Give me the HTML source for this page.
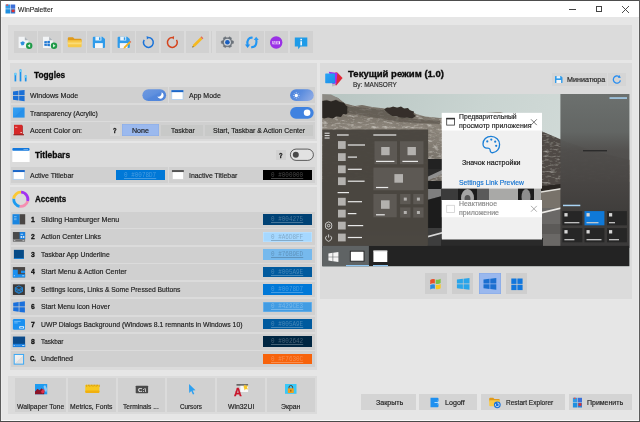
<!DOCTYPE html>
<html lang="en"><head><meta charset="utf-8"><title>WinPaletter</title>
<style>
html,body{margin:0;padding:0;}
body{width:640px;height:422px;overflow:hidden;background:#e6e6e6;font-family:"Liberation Sans", sans-serif;}
#w{position:relative;width:640px;height:422px;overflow:hidden;background:#e6e6e6;}
#w div,#w svg{position:absolute;}
#w span{position:absolute;white-space:nowrap;line-height:10px;height:10px;transform-origin:0 50%;}
</style></head><body><div id="w">
<div style="left:0px;top:0px;width:640px;height:422px;background:#e6e6e6;"></div>
<div style="left:0px;top:1px;width:640px;height:16.4px;background:#ffffff;"></div>
<div style="left:0px;top:0px;width:640px;height:1px;background:#4d4d4d;"></div>
<div style="left:0px;top:0px;width:1px;height:422px;background:#5c5c5c;"></div>
<div style="left:1px;top:18px;width:0.7px;height:402px;background:#ececec;"></div>
<div style="left:639px;top:0px;width:1px;height:422px;background:#5c5c5c;"></div>
<div style="left:638.3px;top:18px;width:0.7px;height:402px;background:#ececec;"></div>
<div style="left:1px;top:419.9px;width:638px;height:0.8px;background:#fafafa;"></div>
<div style="left:0px;top:420.7px;width:640px;height:1.3px;background:#4a4a4a;"></div>
<svg style="left:5px;top:4px" width="11" height="10" viewBox="0 0 11 10"><rect x="0.5" y="0.5" width="4.6" height="4.2" fill="#2f9be8"/><rect x="5.6" y="0.5" width="4.6" height="4.2" fill="#3a6fd8"/><rect x="0.5" y="5.2" width="4.6" height="4.3" fill="#1f8fe0"/><rect x="5.6" y="5.2" width="4.6" height="4.3" fill="#2c7fd6"/><rect x="6.6" y="5.6" width="3" height="2.6" fill="#e03030"/><rect x="1.2" y="0.3" width="2" height="1.5" fill="#e05050"/></svg>
<div style="left:569.4px;top:8.6px;width:6.8px;height:0.9px;background:#444;"></div>
<div style="left:595.8px;top:6px;width:6.2px;height:6.2px;background:transparent;border:0.9px solid #444;box-sizing:border-box;"></div>
<svg style="left:621px;top:5px" width="9" height="9" viewBox="0 0 9 9"><path d="M1 1 L8 8 M8 1 L1 8" stroke="#3a3a3a" stroke-width="0.9" fill="none"/></svg>
<div style="left:8px;top:25px;width:624px;height:34.5px;background:#dbdbdb;"></div>
<div style="left:13.9px;top:31.3px;width:23.0px;height:21.5px;background:#d1d1d1;"></div>
<div style="left:38.2px;top:31.3px;width:23.0px;height:21.5px;background:#d1d1d1;"></div>
<div style="left:63.0px;top:31.3px;width:23.0px;height:21.5px;background:#d1d1d1;"></div>
<div style="left:87.4px;top:31.3px;width:23.0px;height:21.5px;background:#d1d1d1;"></div>
<div style="left:111.9px;top:31.3px;width:23.0px;height:21.5px;background:#d1d1d1;"></div>
<div style="left:136.4px;top:31.3px;width:23.0px;height:21.5px;background:#d1d1d1;"></div>
<div style="left:161.1px;top:31.3px;width:23.0px;height:21.5px;background:#d1d1d1;"></div>
<div style="left:185.7px;top:31.3px;width:23.0px;height:21.5px;background:#d1d1d1;"></div>
<div style="left:216.2px;top:31.3px;width:23.0px;height:21.5px;background:#d1d1d1;"></div>
<div style="left:240.6px;top:31.3px;width:23.0px;height:21.5px;background:#d1d1d1;"></div>
<div style="left:265px;top:31.3px;width:23.0px;height:21.5px;background:#d1d1d1;"></div>
<div style="left:289.5px;top:31.3px;width:23.0px;height:21.5px;background:#d1d1d1;"></div>
<div style="left:211.4px;top:31.3px;width:0.9px;height:21.5px;background:#d0d0d0;"></div>
<div style="left:9.5px;top:62.6px;width:307.3px;height:78.1px;background:#dbdbdb;"></div>
<div style="left:10.8px;top:87.3px;width:157.2px;height:16.1px;background:#d0d0d0;"></div>
<div style="left:168.9px;top:87.3px;width:146.5px;height:16.1px;background:#d0d0d0;"></div>
<div style="left:10.8px;top:104.8px;width:304.6px;height:16.1px;background:#d0d0d0;"></div>
<div style="left:10.8px;top:122.3px;width:304.6px;height:16.4px;background:#d0d0d0;"></div>
<div style="left:9.5px;top:143.1px;width:307.3px;height:41.6px;background:#dbdbdb;"></div>
<div style="left:10.8px;top:167.3px;width:157.2px;height:15.6px;background:#d0d0d0;"></div>
<div style="left:168.9px;top:167.3px;width:146.5px;height:15.6px;background:#d0d0d0;"></div>
<div style="left:9.5px;top:186.6px;width:307.3px;height:183px;background:#dbdbdb;"></div>
<div style="left:115.7px;top:169.9px;width:49.5px;height:10.4px;background:#0078d7;"></div>
<div style="left:262.7px;top:169.9px;width:49.5px;height:10.4px;background:#000000;"></div>
<div style="left:10.8px;top:212.0px;width:304.6px;height:15.7px;background:#d0d0d0;"></div>
<div style="left:262.7px;top:214.4px;width:49.5px;height:10.5px;background:#004275;"></div>
<div style="left:10.8px;top:229.42000000000002px;width:304.6px;height:15.7px;background:#d0d0d0;"></div>
<div style="left:262.7px;top:231.82000000000002px;width:49.5px;height:10.5px;background:#a6d8ff;box-shadow:inset 0 0 0 0.6px #c1e4ff;"></div>
<div style="left:10.8px;top:246.84px;width:304.6px;height:15.7px;background:#d0d0d0;"></div>
<div style="left:262.7px;top:249.24px;width:49.5px;height:10.5px;background:#76b9ed;"></div>
<div style="left:10.8px;top:264.26px;width:304.6px;height:15.7px;background:#d0d0d0;"></div>
<div style="left:262.7px;top:266.65999999999997px;width:49.5px;height:10.5px;background:#005a9e;"></div>
<div style="left:10.8px;top:281.68px;width:304.6px;height:15.7px;background:#d0d0d0;"></div>
<div style="left:262.7px;top:284.08px;width:49.5px;height:10.5px;background:#0078d7;"></div>
<div style="left:10.8px;top:299.1px;width:304.6px;height:15.7px;background:#d0d0d0;"></div>
<div style="left:262.7px;top:301.5px;width:49.5px;height:10.5px;background:#429ce3;box-shadow:inset 0 0 0 0.6px #7bbaeb;"></div>
<div style="left:10.8px;top:316.52px;width:304.6px;height:15.7px;background:#d0d0d0;"></div>
<div style="left:262.7px;top:318.91999999999996px;width:49.5px;height:10.5px;background:#005a9e;"></div>
<div style="left:10.8px;top:333.94px;width:304.6px;height:15.7px;background:#d0d0d0;"></div>
<div style="left:262.7px;top:336.34px;width:49.5px;height:10.5px;background:#002642;"></div>
<div style="left:10.8px;top:351.36px;width:304.6px;height:15.7px;background:#d0d0d0;"></div>
<div style="left:262.7px;top:353.76px;width:49.5px;height:10.5px;background:#f7630c;"></div>
<div style="left:8.4px;top:376px;width:308.8px;height:37.6px;background:#dbdbdb;"></div>
<div style="left:14.5px;top:378.3px;width:51.9px;height:33.4px;background:#d1d1d1;"></div>
<div style="left:68.1px;top:378.3px;width:48.2px;height:33.4px;background:#d1d1d1;"></div>
<div style="left:118px;top:378.3px;width:47.3px;height:33.4px;background:#d1d1d1;"></div>
<div style="left:167.3px;top:378.3px;width:47.8px;height:33.4px;background:#d1d1d1;"></div>
<div style="left:217.2px;top:378.3px;width:47.7px;height:33.4px;background:#d1d1d1;"></div>
<div style="left:267px;top:378.3px;width:47.6px;height:33.4px;background:#d1d1d1;"></div>
<div style="left:361.1px;top:394.2px;width:54.7px;height:16.3px;background:#d4d4d4;"></div>
<div style="left:418.9px;top:394.2px;width:58.6px;height:16.3px;background:#d4d4d4;"></div>
<div style="left:481.4px;top:394.2px;width:83.8px;height:16.3px;background:#d4d4d4;"></div>
<div style="left:569.1px;top:394.2px;width:62.6px;height:16.3px;background:#d4d4d4;"></div>
<div style="left:320.3px;top:63.3px;width:312.2px;height:236.1px;background:#dbdbdb;"></div>
<div style="left:551.9px;top:73px;width:54.9px;height:12.7px;background:#d5d5d5;"></div>
<div style="left:608.1px;top:73px;width:17.6px;height:12.7px;background:#d5d5d5;"></div>
<div style="left:425.4px;top:273.3px;width:21.2px;height:21px;background:#cecece;"></div>
<div style="left:452.2px;top:273.3px;width:21px;height:21px;background:#cecece;"></div>
<div style="left:506px;top:273.3px;width:21px;height:21px;background:#cecece;"></div>
<div style="left:478.9px;top:273.3px;width:21.9px;height:21px;background:#9ab8ee;box-shadow:inset 0 0 0 0.6px #86a8e6;"></div>
<svg style="left:0;top:0" width="640" height="422" viewBox="0 0 640 422"><defs>
<clipPath id="pc"><rect x="322.2" y="94" width="307.4" height="172.4"/></clipPath>
<linearGradient id="sky" x1="0" y1="0" x2="1" y2="0.3"><stop offset="0" stop-color="#b5c3c0"/><stop offset="0.5" stop-color="#c9d4d1"/><stop offset="1" stop-color="#d6dedb"/></linearGradient>
<linearGradient id="hill" x1="0" y1="0" x2="0" y2="1"><stop offset="0" stop-color="#6e675e"/><stop offset="0.2" stop-color="#7b746a"/><stop offset="0.32" stop-color="#8f887e"/><stop offset="0.6" stop-color="#7a746c"/><stop offset="1" stop-color="#5f5a54"/></linearGradient>
<linearGradient id="road" x1="0" y1="0" x2="0" y2="1"><stop offset="0" stop-color="#5a5a58"/><stop offset="1" stop-color="#77777a"/></linearGradient>
<linearGradient id="ac" x1="0" y1="0" x2="0" y2="1"><stop offset="0" stop-color="#696d6b"/><stop offset="0.25" stop-color="#5f6260"/><stop offset="0.37" stop-color="#4f4d4b"/><stop offset="0.62" stop-color="#464341"/><stop offset="0.8" stop-color="#3d3b39"/><stop offset="1" stop-color="#393838"/></linearGradient>
<filter id="bl" x="-5%" y="-5%" width="110%" height="110%"><feGaussianBlur stdDeviation="0.55"/></filter>
<filter id="nz" x="0" y="0" width="100%" height="100%"><feTurbulence type="fractalNoise" baseFrequency="0.16 0.4" numOctaves="3" seed="11"/><feColorMatrix type="matrix" values="0 0 0 0 0.2  0 0 0 0 0.18  0 0 0 0 0.15  2.2 0 0 0 -1.0"/><feComposite in2="SourceGraphic" operator="in"/></filter>
<filter id="nl" x="0" y="0" width="100%" height="100%"><feTurbulence type="fractalNoise" baseFrequency="0.18 0.45" numOctaves="3" seed="3"/><feColorMatrix type="matrix" values="0 0 0 0 0.78  0 0 0 0 0.76  0 0 0 0 0.72  0 2.2 0 0 -1.1"/><feComposite in2="SourceGraphic" operator="in"/></filter>
</defs><g clip-path="url(#pc)"><g filter="url(#bl)"><rect x="312" y="84" width="328" height="193" fill="url(#sky)"/><path d="M322 95 L330 95.5 L338 98 L345 103.5 L355 106 L362 105 L372 107 L385 108.5 L392 107 L400 108 L410 110 L416 114 L425 116.5 L440 118 L470 114 L500 112 L520 118 L542 131.8 L560 139.4 L590 150 L630 160 L630 200 L322 200 Z" fill="url(#hill)"/><path d="M322 95 L330 95.5 L338 98 L345 103.5 L355 106 L362 105 L372 107 L385 108.5 L392 107 L400 108 L410 110 L416 114 L425 116.5 L440 118 L470 114 L500 112 L520 118 L542 131.8 L560 139.4 L590 150 L630 160 L630 200 L322 200 Z" fill="#000" filter="url(#nz)" opacity="0.8"/><path d="M322 95 L330 95.5 L338 98 L345 103.5 L355 106 L362 105 L372 107 L385 108.5 L392 107 L400 108 L410 110 L416 114 L425 116.5 L440 118 L470 114 L500 112 L520 118 L542 131.8 L560 139.4 L590 150 L630 160 L630 200 L322 200 Z" fill="#000" filter="url(#nl)" opacity="0.7"/><path d="M320 101 L327 100.2 L331 101.5 L336 100 L340 102 L344 102.8 L346 105.5 L348.5 107 L347.5 110 L349 112 L346 114.5 L343 114 L341 117 L336 116.5 L333 118.5 L328 117.5 L324 118.5 L320 117 Z" fill="#2a2622"/><path d="M320 94 L331 94.5 L338 98 L341 101 L336 99.5 L331 101 L327 99.8 L320 100.5 Z" fill="#8d8a84"/><path d="M384 109.5 L387 107.5 L390 108 L393 106.5 L397 107.800 L401 106.500 L404 108.500 L408 108 L410 110.500 L414 111.500 L413.500 114 L416 116 L412 118.500 L407 117.500 L402 118.500 L397 116.500 L392 116 L388 113.500 Z" fill="#342f2a"/><path d="M347 106 L384 110 L392 116 L416 119 L440 121 L440 124 L400 122 L347 113 Z" fill="#5d574f" opacity="0.7"/><rect x="322" y="182" width="308" height="66" fill="url(#road)"/><rect x="427" y="159" width="15" height="10" fill="#242424"/><path d="M427 176 L442 169 L442 174 L427 181 Z" fill="#8f8f8f"/><rect x="427" y="181" width="15" height="8" fill="#1f1f1f"/><path d="M427 169 L442 169 L442 170 L427 177 Z" fill="#2a2a2a"/><path d="M427 189 L442 189 L442 196 L427 200 Z" fill="#7e7e7e"/><path d="M427 200 L442 196 L442 228 L427 228 Z" fill="#1e1e1f"/><rect x="427" y="228" width="15" height="18" fill="#3c3c3c"/><path d="M427 236 L442 232 L442 233.800 L427 237.800 Z" fill="#d8d8d8"/><rect x="441" y="188" width="102" height="13" fill="#a9a9a7"/><rect x="441" y="188" width="17" height="13" fill="#3a3a3a"/><rect x="458" y="188" width="19" height="13" fill="#1c1c1c"/><ellipse cx="467.500" cy="198" rx="6.500" ry="9" fill="#a5a5a5"/><ellipse cx="467.500" cy="199" rx="3" ry="4" fill="#555"/><rect x="477" y="188" width="12" height="13" fill="#5a5a5a"/><rect x="518" y="188" width="16" height="13" fill="#1b1b1b"/><ellipse cx="526" cy="197" rx="4.500" ry="8" fill="#8d8d8d"/><path d="M541 131 L561 139.500 L561 191 L541 191 Z" fill="#4f4a45"/><path d="M541 131 L561 139.500 L561 191 L541 191 Z" fill="#000" filter="url(#nl)" opacity="0.55"/><rect x="541" y="188" width="20" height="24" fill="#78726a"/><path d="M541 186 L561 184 L561 188.500 L541 191.500 Z" fill="#2a2624"/><path d="M541 191.200 L561 188 L561 189.500 L541 192.700 Z" fill="#e4e2dc"/><rect x="541" y="208" width="20" height="38" fill="#6a6866"/><path d="M541 212 L561 207.200 L561 208.900 L541 213.700 Z" fill="#eceae6"/><rect x="541" y="224" width="20" height="10" fill="#5c5a58"/><rect x="441" y="238" width="102" height="9" fill="#2b2b2b"/></g><rect x="322.2" y="129.5" width="105.9" height="116.4" fill="#49453f" fill-opacity="0.97"/><rect x="324.6" y="132.7" width="5" height="1" fill="#e9e9e9"/><rect x="324.6" y="135.1" width="5" height="1" fill="#e9e9e9"/><rect x="324.6" y="137.5" width="5" height="1" fill="#e9e9e9"/><rect x="337" y="134.4" width="11.7" height="1.2" fill="#e9e9e9"/><rect x="373.3" y="134.4" width="23" height="1.2" fill="#e9e9e9"/><rect x="338" y="141.1" width="7.7" height="7.8" fill="#b3b1ae"/><rect x="347.8" y="144.4" width="17.2" height="1.2" fill="#e9e9e9"/><rect x="338" y="153.2" width="7.7" height="7.8" fill="#b3b1ae"/><rect x="347.8" y="156.5" width="9.2" height="1.2" fill="#e9e9e9"/><rect x="338" y="165.4" width="7.7" height="7.8" fill="#b3b1ae"/><rect x="347.8" y="168.70000000000002" width="14.0" height="1.2" fill="#e9e9e9"/><rect x="338" y="177.29999999999998" width="7.7" height="7.8" fill="#b3b1ae"/><rect x="347.8" y="180.6" width="16.8" height="1.2" fill="#e9e9e9"/><rect x="338" y="197.79999999999998" width="7.7" height="7.8" fill="#b3b1ae"/><rect x="347.8" y="201.1" width="14.2" height="1.2" fill="#e9e9e9"/><rect x="338" y="209.7" width="7.7" height="7.8" fill="#b3b1ae"/><rect x="347.8" y="213.0" width="8.6" height="1.2" fill="#e9e9e9"/><rect x="338" y="221.7" width="7.7" height="7.8" fill="#b3b1ae"/><rect x="347.8" y="225.0" width="15.4" height="1.2" fill="#e9e9e9"/><rect x="338" y="233.6" width="7.7" height="7.8" fill="#b3b1ae"/><rect x="347.8" y="236.9" width="14.2" height="1.2" fill="#e9e9e9"/><rect x="337.6" y="192" width="11.4" height="1.2" fill="#e9e9e9"/><g fill="none" stroke="#e9e9e9" stroke-width="0.8"><path d="M328.6 221.9 l2.7 1.2 l0.5 2.6 l-0.5 2.5 l-2.7 1.2 l-2.7 -1.2 l-0.5 -2.5 l0.5 -2.6 z"/><circle cx="328.6" cy="225.6" r="1.3"/><path d="M326.7 235.8 a3 3 0 1 0 3.8 0 M328.6 234.4 v3.2"/></g><rect x="374.5" y="141.2" width="22.5" height="23" fill="#5d5954"/><rect x="400" y="141.2" width="23.5" height="23" fill="#5d5954"/><rect x="381.2" y="147" width="8.4" height="8.2" fill="#b3b1ae"/><rect x="407.5" y="147" width="8.4" height="8.2" fill="#b3b1ae"/><rect x="376" y="160.8" width="18.4" height="1.2" fill="#e9e9e9"/><rect x="402.4" y="160.8" width="15.6" height="1.2" fill="#e9e9e9"/><rect x="373.4" y="167.6" width="50.3" height="22.7" fill="#5d5954"/><rect x="394.4" y="174.1" width="8.6" height="8.6" fill="#b3b1ae"/><rect x="376" y="186.9" width="12.2" height="1.2" fill="#e9e9e9"/><rect x="373.4" y="194" width="23.3" height="23.3" fill="#5d5954"/><rect x="381" y="200.3" width="8.6" height="8.5" fill="#b3b1ae"/><rect x="376" y="214.2" width="8.8" height="1.2" fill="#e9e9e9"/><rect x="400.1" y="194" width="10.4" height="10.2" fill="#5d5954"/><rect x="403.8" y="197.6" width="3" height="3" fill="#b3b1ae"/><rect x="400.1" y="207.4" width="10.4" height="10.2" fill="#5d5954"/><rect x="403.8" y="211.0" width="3" height="3" fill="#b3b1ae"/><rect x="413.2" y="194" width="10.4" height="10.2" fill="#5d5954"/><rect x="416.9" y="197.6" width="3" height="3" fill="#b3b1ae"/><rect x="413.2" y="207.4" width="10.4" height="10.2" fill="#5d5954"/><rect x="416.9" y="211.0" width="3" height="3" fill="#b3b1ae"/><rect x="560.4" y="94" width="69.3" height="152" fill="url(#ac)" fill-opacity="0.97"/><rect x="609.5" y="97.3" width="17.5" height="1.5" fill="#a9d4f5"/><rect x="583" y="150" width="24" height="1.4" fill="#2b2b2b"/><rect x="563" y="204.7" width="17.3" height="1.5" fill="#a9d4f5"/><rect x="562.4" y="211.1" width="19.9" height="14.2" fill="#262626"/><rect x="564.4" y="213.1" width="3.2" height="3.4" fill="#d6d6d6"/><rect x="564.4" y="222.1" width="15" height="1.2" fill="#d0d0d0"/><rect x="584.5" y="211.1" width="19.9" height="14.2" fill="#0f79d8"/><rect x="586.5" y="213.1" width="3.2" height="3.4" fill="#d6d6d6"/><rect x="586.5" y="222.1" width="12" height="1.2" fill="#d0d0d0"/><rect x="607" y="211.1" width="19.9" height="14.2" fill="#262626"/><rect x="609" y="213.1" width="3.2" height="3.4" fill="#d6d6d6"/><rect x="609" y="222.1" width="6" height="1.2" fill="#d0d0d0"/><rect x="562.4" y="228.1" width="19.9" height="14.2" fill="#262626"/><rect x="564.4" y="230.1" width="3.2" height="3.4" fill="#d6d6d6"/><rect x="564.4" y="239.1" width="10" height="1.2" fill="#d0d0d0"/><rect x="584.5" y="228.1" width="19.9" height="14.2" fill="#262626"/><rect x="586.5" y="230.1" width="3.2" height="3.4" fill="#d6d6d6"/><rect x="586.5" y="239.1" width="15" height="1.2" fill="#d0d0d0"/><rect x="607" y="228.1" width="19.9" height="14.2" fill="#262626"/><rect x="609" y="230.1" width="3.2" height="3.4" fill="#d6d6d6"/><rect x="609" y="239.1" width="10" height="1.2" fill="#d0d0d0"/><rect x="322.2" y="245.9" width="307.4" height="20.5" fill="#232323"/><rect x="322.2" y="245.9" width="46.7" height="20.5" fill="#5f6364"/><rect x="346" y="265" width="23" height="1.4" fill="#8fc6f2"/><rect x="373" y="265" width="15" height="1.4" fill="#8fc6f2"/><g fill="#f4f4f4"><path d="M328.4 253.4 L332.6 252.8 L332.6 256.7 L328.4 256.7 Z"/><path d="M333.2 252.7 L338.4 252 L338.4 256.7 L333.2 256.7 Z"/><path d="M328.4 257.3 L332.6 257.3 L332.6 261.2 L328.4 260.6 Z"/><path d="M333.2 257.3 L338.4 257.3 L338.4 262 L333.2 261.3 Z"/></g><rect x="350.3" y="251.2" width="13.7" height="10" fill="#ffffff" stroke="#222" stroke-width="0.9"/><rect x="373.4" y="250.6" width="13.9" height="11.4" fill="#ffffff"/><rect x="373.4" y="250.6" width="13.9" height="1" fill="#ddd"/><rect x="441.8" y="112.9" width="100.2" height="75.7" fill="#f0f0f0"/><rect x="441.8" y="112.9" width="100.2" height="17.6" fill="#ffffff"/><rect x="446.7" y="118.3" width="7.8" height="6.8" fill="#fff" stroke="#333" stroke-width="0.8"/><rect x="446.3" y="117.9" width="8.6" height="1.5" fill="#333"/><path d="M531 119.3 L536.8 125.1 M536.8 119.3 L531 125.1" stroke="#555" stroke-width="0.8" fill="none"/><rect x="441.8" y="200" width="100.2" height="39.5" fill="#f0f0f0"/><rect x="441.8" y="200" width="100.2" height="17.2" fill="#ffffff"/><rect x="446.7" y="205.3" width="7.8" height="7.2" fill="#fff" stroke="#d0d0d0" stroke-width="0.8"/><path d="M531 205.9 L536.8 211.7 M536.8 205.9 L531 211.7" stroke="#999" stroke-width="0.8" fill="none"/><g transform="translate(0 -0.9)"><g fill="none" stroke="#1b7fd6" stroke-width="1.3"><path d="M491 137.2 c-4.6 0 -8 3.4 -8 7.6 c0 3.2 2.2 4.4 4.2 4.2 c2 -0.2 3 0.8 3 2.4 c0 1.6 1.2 2.4 2.8 2.2 c4 -0.6 6.6 -4.2 6.6 -8.2 c0 -4.6 -3.8 -8.2 -8.600 -8.2 z"/></g><g fill="#1b7fd6"><circle cx="487.300" cy="142.300" r="1.1"/><circle cx="491.300" cy="140.500" r="1.1"/><circle cx="495.200" cy="142.600" r="1.1"/><circle cx="496.200" cy="146.700" r="1.1"/></g></g></g></svg>
<svg style="left:14px;top:31px" width="300" height="23" viewBox="14 31 300 23"><path d="M18.6 36.7 h6.2 l3.6 3.6 v7.7 h-9.8 z" fill="#f2f4f6"/><path d="M24.8 36.7 l3.6 3.6 h-3.6 z" fill="#aeb4ba"/><path d="M20.300 42.5 l2.5 -1.2 l2 1 l-1 2.600 l-2.200 0.600 z" fill="#2f8fdc"/><circle cx="29.2" cy="45.8" r="3.2" fill="#1f9a48"/><path d="M27.5 45.8 l2.600 -1.700 v3.400 z" fill="#d8f2df"/><path d="M43 36.7 h6.2 l3.6 3.6 v7.7 h-9.8 z" fill="#f2f4f6"/><path d="M49.2 36.7 l3.6 3.6 h-3.6 z" fill="#aeb4ba"/><g fill="#1f78d4"><path d="M44.3 41.3 L46.849999999999994 41.05 L46.849999999999994 43.25 L44.3 43.25 Z"/><path d="M47.349999999999994 41.00535714285714 L49.9 40.8 L49.9 43.25 L47.349999999999994 43.25 Z"/><path d="M44.3 43.75 L46.849999999999994 43.75 L46.849999999999994 45.949999999999996 L44.3 45.699999999999996 Z"/><path d="M47.349999999999994 43.75 L49.9 43.75 L49.9 46.199999999999996 L47.349999999999994 45.99464285714285 Z"/></g><circle cx="54" cy="45.8" r="3.2" fill="#1f9a48"/><path d="M55.600 45.8 l-2.600 -1.700 v3.400 z" fill="#d8f2df"/><path d="M67.8 38.2 a1 1 0 0 1 1 -1 h4.200 l1.500 1.500 h6.100 a1 1 0 0 1 1 1 v2 h-13.800 z" fill="#e09a1a"/><path d="M67.8 40.3 h13.800 v6 a1 1 0 0 1 -1 1 h-11.800 a1 1 0 0 1 -1 -1 z" fill="#f7c948"/><rect x="67.8" y="42.500" width="13.800" height="1.800" fill="#fbdc78"/><path d="M92.8 37.7 a1 1 0 0 1 1 -1 h8.6 l2.6 2.4 v7.9 a1 1 0 0 1 -1 1 h-10.2 a1 1 0 0 1 -1 -1 z" fill="#2f9bea"/><rect x="95.39999999999999" y="36.7" width="6" height="3.8" fill="#e9f3fb"/><rect x="99.0" y="37.300000000000004" width="1.5" height="2.6" fill="#2f9bea"/><rect x="95.0" y="43.1" width="7.8" height="4.9" fill="#f4f6f8"/><path d="M117.6 37.7 a1 1 0 0 1 1 -1 h8.6 l2.6 2.4 v7.9 a1 1 0 0 1 -1 1 h-10.2 a1 1 0 0 1 -1 -1 z" fill="#2f9bea"/><rect x="120.19999999999999" y="36.7" width="6" height="3.8" fill="#e9f3fb"/><rect x="123.8" y="37.300000000000004" width="1.5" height="2.6" fill="#2f9bea"/><rect x="119.8" y="43.1" width="7.8" height="4.9" fill="#f4f6f8"/><path d="M124 46.800 l5.300 -5.300 l1.300 1.300 l-5.300 5.300 l-1.900 0.600 z" fill="#f3b21c"/><path d="M129.300 41.500 l0.700 -0.700 l1.300 1.300 l-0.700 0.700 z" fill="#e0664a"/><path d="M148.300 37.600 a4.900 4.900 0 1 1 -4.100 2.300" fill="none" stroke="#1a73d9" stroke-width="1.500"/><path d="M146.600 36 l2.800 1.500 l-2.500 2 z" fill="#1a73d9"/><path d="M172.400 37.600 a4.900 4.900 0 1 0 4.100 2.300" fill="none" stroke="#d5431c" stroke-width="1.500"/><path d="M174.100 36 l-2.800 1.500 l2.500 2 z" fill="#d5431c"/><path d="M192.300 47.400 l0.900 -2.800 l7.300 -7.300 l1.900 1.900 l-7.300 7.300 z" fill="#f5b920"/><path d="M200.500 37.300 l1 -1 l1.900 1.900 l-1 1 z" fill="#e66a52"/><path d="M192.300 47.400 l0.500 -1.500 l1 1 z" fill="#444"/><path d="M233.49 41.11 L233.49 43.29 L232.00 43.74 L231.15 45.10 L231.47 46.50 L229.42 47.59 L228.25 46.64 L226.55 46.64 L225.38 47.59 L223.33 46.50 L223.65 45.10 L222.80 43.74 L221.31 43.29 L221.31 41.11 L222.80 40.66 L223.65 39.30 L223.33 37.90 L225.38 36.81 L226.55 37.76 L228.25 37.76 L229.42 36.81 L231.47 37.90 L231.15 39.30 L232.00 40.66 Z" fill="#6c737b" stroke="#6c737b" stroke-width="0.5" stroke-linejoin="round"/><circle cx="227.4" cy="42.2" r="3.5" fill="#cfd4da"/><circle cx="227.4" cy="42.2" r="2.3" fill="#1a5fc0"/><g fill="none" stroke="#2196f3" stroke-width="2.1"><path d="M252.600 37.700 C248.800 37.200 246.600 40.300 247.600 45"/><path d="M251.200 47.100 C255 47.600 257.200 44.300 256.200 39.600"/></g><path d="M245 44.600 h5.200 l-2.600 3.300 z" fill="#1e8ff0"/><path d="M253.700 40 h5 l-2.500 -3.300 z" fill="#2a9cf4"/><circle cx="276.200" cy="42.500" r="6.200" fill="#9a31e6"/><rect x="272.400" y="40.900" width="7.600" height="3.300" rx="0.500" fill="#f3e6fb"/><path d="M294.800 37.600 h12.500 v8.900 h-6.800 l-2.400 2.700 v-2.700 h-3.300 z" fill="#1e9be8"/><rect x="300.400" y="38.800" width="1.500" height="1.500" fill="#fff"/><rect x="300.400" y="41.200" width="1.500" height="4.200" fill="#fff"/></svg>
<svg style="left:140px;top:88px" width="176" height="74" viewBox="140 88 176 74"><defs><linearGradient id="tg1" x1="0" y1="0" x2="1" y2="1"><stop offset="0" stop-color="#7099df"/><stop offset="0.45" stop-color="#5f90de"/><stop offset="0.55" stop-color="#5387db"/><stop offset="1" stop-color="#5085da"/></linearGradient><linearGradient id="tg2" x1="0" y1="0" x2="1" y2="0.4"><stop offset="0" stop-color="#4a82dc"/><stop offset="0.5" stop-color="#5a8cde"/><stop offset="1" stop-color="#86a6e4"/></linearGradient></defs><rect x="142.4" y="89.2" width="23.7" height="11.9" rx="5.95" fill="url(#tg1)"/><path d="M161.600 92.300 a3.300 3.300 0 1 1 -4.300 4.300 a3.600 3.600 0 0 0 4.300 -4.300 z" fill="#ffffff"/><rect x="290.1" y="89.2" width="23.6" height="11.9" rx="5.95" fill="url(#tg2)"/><circle cx="296.3" cy="95.5" r="1.700" fill="#fff"/><g stroke="#e6eefb" stroke-width="0.600"><path d="M298.60 95.50 L299.60 95.50"/><path d="M297.93 97.13 L298.63 97.83"/><path d="M296.30 97.80 L296.30 98.80"/><path d="M294.67 97.13 L293.97 97.83"/><path d="M294.00 95.50 L293.00 95.50"/><path d="M294.67 93.87 L293.97 93.17"/><path d="M296.30 93.20 L296.30 92.20"/><path d="M297.93 93.87 L298.63 93.17"/></g><rect x="290.1" y="106.9" width="23.6" height="11.8" rx="5.9" fill="#3f82e0"/><circle cx="307.1" cy="112.8" r="3.300" fill="#ffffff"/><rect x="290.400" y="149.100" width="23" height="11.300" rx="5.650" fill="#e2e2e2" stroke="#3a3a3a" stroke-width="0.800"/><circle cx="295.800" cy="154.750" r="3" fill="#4a4a4a"/></svg>
<div style="left:109.9px;top:124.3px;width:10.1px;height:12.2px;background:#d6d6d6;"></div>
<div style="left:275.5px;top:149.5px;width:10.5px;height:10px;background:#d2d2d2;"></div>
<div style="left:122.2px;top:124.4px;width:36.4px;height:12px;background:#9bb9ee;box-shadow:inset 0 0 0 0.5px #8aabe6;"></div>
<div style="left:161px;top:124.9px;width:42.2px;height:11.1px;background:#c8c9c8;"></div>
<div style="left:205.3px;top:124.9px;width:107.4px;height:11.1px;background:#c8c9c8;"></div>
<svg style="left:12px;top:88px" width="174" height="94" viewBox="12 88 174 94"><defs><linearGradient id="trn" x1="0" y1="0" x2="1" y2="1"><stop offset="0" stop-color="#3aa3f2"/><stop offset="0.5" stop-color="#2d97ee"/><stop offset="0.52" stop-color="#2690ea"/><stop offset="1" stop-color="#2a94ec"/></linearGradient></defs><g fill="#1a6fd6"><path d="M13 91.4 L18.45 90.65 L18.45 95.2 L13 95.2 Z"/><path d="M19.15 90.55948275862069 L24.6 89.9 L24.6 95.2 L19.15 95.2 Z"/><path d="M13 95.9 L18.45 95.9 L18.45 100.45 L13 99.7 Z"/><path d="M19.15 95.9 L24.6 95.9 L24.6 101.2 L19.15 100.54051724137932 Z"/></g><rect x="13" y="107.5" width="11.6" height="10.1" fill="url(#trn)"/><rect x="14" y="124.8" width="8" height="9.3" fill="#d62828"/><rect x="13.5" y="134.1" width="10.4" height="1.2" fill="#9c1616"/><rect x="15" y="126.800" width="2.400" height="1" fill="#f0a0a0"/><rect x="20.400" y="132" width="1.600" height="1" fill="#f0c0c0"/><rect x="22" y="125.500" width="0.800" height="8.600" fill="#b01c1c"/><rect x="171.8" y="90.5" width="11.2" height="8.9" fill="#ffffff" stroke="#a6cdf2" stroke-width="0.7"/><rect x="171.45000000000002" y="90.15" width="11.899999999999999" height="2.0" fill="#1a66c8"/><rect x="12.3" y="148.1" width="17.3" height="13.900" fill="#ffffff"/><rect x="12.3" y="148.1" width="17.3" height="2.600" rx="0.800" fill="#1478dc"/><rect x="23.500" y="149" width="4.500" height="0.800" fill="#7db8f0"/><rect x="13.2" y="170.4" width="11.2" height="8.9" fill="#ffffff" stroke="#a6cdf2" stroke-width="0.7"/><rect x="12.85" y="170.05" width="11.899999999999999" height="2.0" fill="#1a66c8"/><rect x="172.3" y="170.4" width="11.2" height="8.9" fill="#ffffff" stroke="#cfcfcf" stroke-width="0.7"/><rect x="171.95000000000002" y="170.05" width="11.899999999999999" height="2.0" fill="#555555"/></svg>
<svg style="left:11px;top:66px" width="22" height="144" viewBox="11 66 22 144"><rect x="15.15" y="68.5" width="0.5" height="13" fill="#bfe2f7" opacity="0.7"/><rect x="14.55" y="72.9" width="1.7" height="8.5" fill="#1a92ec"/><rect x="14.200000000000001" y="73.10000000000001" width="2.4" height="2.2" rx="0.6" fill="#6fd0f8"/><rect x="20.25" y="68.5" width="0.5" height="13" fill="#bfe2f7" opacity="0.7"/><rect x="19.65" y="69.4" width="1.7" height="12.0" fill="#1a92ec"/><rect x="19.3" y="69.7" width="2.4" height="2.2" rx="0.6" fill="#6fd0f8"/><rect x="25.45" y="68.5" width="0.5" height="13" fill="#bfe2f7" opacity="0.7"/><rect x="24.849999999999998" y="75.3" width="1.7" height="6.1" fill="#1a92ec"/><rect x="24.5" y="75.5" width="2.4" height="2.2" rx="0.6" fill="#6fd0f8"/><path d="M21.05 192.20 A7.1 7.1 0 0 1 27.66 201.14" fill="none" stroke="#a233f0" stroke-width="2.8"/><path d="M27.66 201.14 A7.1 7.1 0 0 1 19.57 206.29" fill="none" stroke="#f48fb1" stroke-width="2.8"/><path d="M19.57 206.29 A7.1 7.1 0 0 1 13.73 198.68" fill="none" stroke="#1e9bf0" stroke-width="2.8"/><path d="M13.73 198.68 A7.1 7.1 0 0 1 21.05 192.20" fill="none" stroke="#fbc832" stroke-width="2.8"/></svg>
<svg style="left:12px;top:212px" width="14" height="156" viewBox="12 212 14 156"><rect x="12.5" y="214.2" width="7.2" height="10.2" fill="#1a86e0"/><rect x="19.7" y="214.2" width="5.5" height="10.2" fill="#4a4644"/><rect x="14" y="216.2" width="2.600" height="0.700" fill="#8cc6f5"/><rect x="14" y="217.79999999999998" width="2.600" height="0.700" fill="#8cc6f5"/><rect x="14" y="219.39999999999998" width="2.600" height="0.700" fill="#8cc6f5"/><rect x="12.9" y="232.02" width="12.2" height="7.500" fill="#4a4a4a"/><rect x="19.6" y="232.02" width="5.5" height="7.2" fill="#1a80e0"/><rect x="20.600" y="233.82000000000002" width="2.500" height="0.800" fill="#d8ecfb"/><rect x="20.600" y="236.22" width="1.500" height="1.500" fill="#ffffff"/><rect x="22.800" y="236.22" width="1.500" height="1.500" fill="#ffffff"/><rect x="12.9" y="239.52" width="12.2" height="2.200" fill="#6e6e6e"/><rect x="13.800" y="240.22" width="1.500" height="0.800" fill="#c8c8c8"/><rect x="22.500" y="240.22" width="1.800" height="0.800" fill="#c8c8c8"/><rect x="13.9" y="249.84" width="10" height="9" fill="#064a86"/><rect x="13.9" y="258.04" width="10" height="0.900" fill="#1a84dc"/><rect x="12.9" y="267.06" width="12.2" height="10.3" fill="#4a4644"/><rect x="12.9" y="269.66" width="4.900" height="7.700" fill="#1a90f0"/><rect x="12.9" y="274.26" width="12.2" height="3.100" fill="#1a90f0"/><rect x="21" y="270.66" width="4" height="2.500" fill="#1a90f0"/><rect x="22.200" y="275.36" width="2" height="0.800" fill="#bfe0fa"/><rect x="13.800" y="275.36" width="1.200" height="0.800" fill="#bfe0fa"/><rect x="12.9" y="284.28000000000003" width="12" height="10.7" fill="#3c3a3a"/><g fill="none" stroke="#1a90f0" stroke-width="0.800"><path d="M18.9 285.83000000000004 l3.600 1.900 v3.800 l-3.600 1.900 l-3.600 -1.900 v-3.800 z"/><path d="M15.299999999999999 289.03000000000003 l3.600 1.900 l3.600 -1.900 M15.299999999999999 290.63000000000005 l3.600 1.900 l3.600 -1.900 M15.299999999999999 287.7300000000001 l3.600 1.900 l3.600 -1.900"/></g><g fill="#1a70dc"><path d="M13.2 302.8 L18.7 302.05 L18.7 306.6 L13.2 306.6 Z"/><path d="M19.4 301.9602564102564 L24.9 301.3 L24.9 306.6 L19.4 306.6 Z"/><path d="M13.2 307.3 L18.7 307.3 L18.7 311.85 L13.2 311.1 Z"/><path d="M19.4 307.3 L24.9 307.3 L24.9 312.6 L19.4 311.9397435897436 Z"/></g><rect x="12.9" y="319.12" width="12.1" height="10.7" rx="1.200" fill="#1a90f0"/><rect x="14.200" y="320.92" width="6.500" height="0.800" fill="#7cc4f8"/><rect x="14.200" y="322.52" width="3.500" height="0.800" fill="#7cc4f8"/><rect x="19.200" y="326.32" width="4.900" height="2.300" rx="0.500" fill="#e8f4fd"/><rect x="20.200" y="327.12" width="2.900" height="0.800" fill="#1a90f0"/><rect x="12.9" y="336.54" width="12.2" height="10.5" fill="#0a4a8a"/><rect x="12.9" y="343.84000000000003" width="12.2" height="3.200" fill="#1a80e0"/><rect x="13.600" y="345.04" width="1.200" height="0.900" fill="#a8d4f8"/><rect x="15.500" y="345.24" width="5" height="0.500" fill="#58a8ec"/><rect x="22.200" y="345.04" width="2.200" height="0.900" fill="#d8ecfb"/><defs><linearGradient id="und" x1="0" y1="0" x2="1" y2="1"><stop offset="0" stop-color="#f6f6f6"/><stop offset="0.5" stop-color="#ececec"/><stop offset="0.52" stop-color="#dedede"/><stop offset="1" stop-color="#e4e4e4"/></linearGradient></defs><rect x="14.200" y="354.46000000000004" width="9.400" height="9.700" fill="url(#und)" stroke="#3aa8f5" stroke-width="1"/></svg>
<svg style="left:34px;top:383px" width="264" height="13" viewBox="34 383 264 13"><rect x="35" y="384" width="12.2" height="10.3" fill="#1e9bf0"/><path d="M35 391.500 l2.500 -2.800 l2 1.500 l2.200 -2 l2.500 3 v3.100 h-9.200 z" fill="#8a1428"/><path d="M41 391.500 l2 -2.500 l1.800 1 l-0.500 2.800 l-2.300 0.800 z" fill="#e0304a"/><path d="M43.500 386.500 l1.500 -1.500 l1.200 2 l1 2.500 l-1 3 l-1.500 -2 z" fill="#8cc8f8"/><rect x="85.3" y="384.7" width="14.1" height="8.2" rx="0.800" fill="#f8c820"/><rect x="85.3" y="390.500" width="14.1" height="2.400" rx="0.800" fill="#f0b010"/><rect x="86.50" y="384.7" width="0.600" height="2.2" fill="#c88a10"/><rect x="88.05" y="384.7" width="0.600" height="1.4" fill="#c88a10"/><rect x="89.60" y="384.7" width="0.600" height="2.2" fill="#c88a10"/><rect x="91.15" y="384.7" width="0.600" height="1.4" fill="#c88a10"/><rect x="92.70" y="384.7" width="0.600" height="2.2" fill="#c88a10"/><rect x="94.25" y="384.7" width="0.600" height="1.4" fill="#c88a10"/><rect x="95.80" y="384.7" width="0.600" height="2.2" fill="#c88a10"/><rect x="97.35" y="384.7" width="0.600" height="1.4" fill="#c88a10"/><rect x="98.90" y="384.7" width="0.600" height="2.2" fill="#c88a10"/><rect x="135.7" y="385.7" width="12.4" height="7.5" rx="0.600" fill="#4a4a4a"/><path d="M189 384 l6.500 6.200 l-2.800 0.300 l1.600 3.500 l-1.400 0.600 l-1.600 -3.500 l-2.100 1.900 z" fill="#2ea0f0"/><rect x="240.400" y="384.300" width="7.700" height="7.700" fill="#f8f8f8"/><rect x="236.500" y="384.300" width="11.600" height="1.200" fill="#383838"/><path d="M243.500 386.500 l1.500 -2 l1 1.500 l2 -0.500 l-1 2 l1 2 l-2.200 -0.500 l-1.300 1.500 l-0.300 -2 z" fill="#f8c828"/><rect x="285" y="384" width="11.500" height="9.800" fill="#38c8f8"/><rect x="287.800" y="388.300" width="6" height="4.700" rx="0.600" fill="#f0a020"/><path d="M289 388.300 v-1 a1.800 1.800 0 0 1 3.600 0 v1" fill="none" stroke="#4a3a2a" stroke-width="0.900"/><rect x="290.400" y="389.800" width="0.900" height="1.800" fill="#6a4a10"/></svg>
<svg style="left:430px;top:397px" width="153" height="12" viewBox="430 397 153 12"><path d="M430.500 397.800 h7 a1 1 0 0 1 1 1 v7.500 a1 1 0 0 1 -1 1 h-7 z" fill="#1e90f0"/><path d="M434.500 402.500 h4.700 M437.600 401 l1.600 1.500 l-1.600 1.500" fill="none" stroke="#bfe2fb" stroke-width="0.900"/><path d="M489.200 398.800 a1 1 0 0 1 1 -1 h3 l1.200 1.200 h4.400 a1 1 0 0 1 1 1 v1.500 h-10.600 z" fill="#e09a1a"/><path d="M489.200 400.300 h10.600 v5 a1 1 0 0 1 -1 1 h-8.600 a1 1 0 0 1 -1 -1 z" fill="#f7c948"/><circle cx="497.300" cy="404.800" r="3.400" fill="#1a73d9"/><path d="M497.300 402.900 a1.900 1.900 0 1 1 -1.700 1" fill="none" stroke="#e6f0fc" stroke-width="0.800"/><rect x="572.900" y="397.800" width="4.300" height="4.500" fill="#2f9be8"/><rect x="577.700" y="397.800" width="4.300" height="4.500" fill="#3a6fd8"/><rect x="572.900" y="402.800" width="4.300" height="4.700" fill="#1f8fe0"/><rect x="577.700" y="402.800" width="4.300" height="4.700" fill="#2c7fd6"/><rect x="578.500" y="403.200" width="2.900" height="2.600" fill="#e03030"/><rect x="573.800" y="397.600" width="1.800" height="1.400" fill="#e05050"/></svg>
<svg style="left:324px;top:70px" width="20" height="17" viewBox="324 70 20 17"><defs><linearGradient id="phb" x1="0" y1="0" x2="1" y2="1"><stop offset="0" stop-color="#2aa4f4"/><stop offset="1" stop-color="#1a8ee8"/></linearGradient></defs><path d="M335.500 72.300 l1.800 0.300 l5.300 5.400 l-6.300 7.500 l-2.800 -1 z" fill="#e02838"/><path d="M328.800 71.700 l8.600 1.300 l-1.200 11.300 l-3.500 0.500 z" fill="#a030f0"/><path d="M332.300 84 l3.800 -0.500 l-1.600 2.600 l-2.600 0.300 z" fill="#b8bcc0"/><rect x="325.2" y="73.4" width="9.8" height="9.8" rx="0.600" fill="url(#phb)"/></svg>
<svg style="left:554px;top:73px" width="70" height="13" viewBox="554 73 70 13"><path d="M555 76.700 a0.600 0.600 0 0 1 0.600 -0.600 h5.300 l1.600 1.500 v4.800 a0.600 0.600 0 0 1 -0.600 0.600 h-6.300 a0.600 0.600 0 0 1 -0.600 -0.600 z" fill="#2f9bea"/><rect x="556.600" y="76.100" width="3.600" height="2.300" fill="#e9f3fb"/><rect x="556.400" y="80" width="4.700" height="3" fill="#f4f6f8"/><g transform="rotate(38 616.9 79.5)"><path d="M616.900 75.900 a3.600 3.600 0 1 0 3.300 2.100" fill="none" stroke="#2a8ef0" stroke-width="1.300"/><path d="M616.300 74.300 l2.600 1.600 l-2.400 1.600 z" fill="#2a8ef0"/></g></svg>
<svg style="left:428px;top:276px" width="98" height="16" viewBox="428 276 98 16"><g transform="rotate(-8 436 283.8)"><path d="M430.800 279.200 q2.500 -1.300 4.700 0 l-0.600 4.200 q-2.300 -1.200 -4.700 0 z" fill="#e8502a"/><path d="M436.300 279.500 q2.500 1.300 5 0 l-0.600 4.200 q-2.500 1.300 -5 0 z" fill="#7cc243"/><path d="M430.100 284.300 q2.400 -1.200 4.700 0 l-0.600 4.300 q-2.300 -1.200 -4.700 0 z" fill="#2a8ae0"/><path d="M435.600 284.600 q2.500 1.300 5 0 l-0.600 4.300 q-2.500 1.300 -5 0 z" fill="#f8c820"/></g><g fill="#29a5ea"><path d="M456.9 279.6 L462.9 278.8 L462.9 283.6 L456.9 283.6 Z"/><path d="M463.5 278.7238095238095 L469.5 278 L469.5 283.6 L463.5 283.6 Z"/><path d="M456.9 284.20000000000005 L462.9 284.20000000000005 L462.9 289.0 L456.9 288.2 Z"/><path d="M463.5 284.20000000000005 L469.5 284.20000000000005 L469.5 289.8 L463.5 289.0761904761905 Z"/></g><g fill="#1a6fd0"><path d="M483.5 279.6 L489.55 278.8 L489.55 283.55 L483.5 283.55 Z"/><path d="M490.25 278.71250000000003 L496.3 278 L496.3 283.55 L490.25 283.55 Z"/><path d="M483.5 284.25 L489.55 284.25 L489.55 289.0 L483.5 288.2 Z"/><path d="M490.25 284.25 L496.3 284.25 L496.3 289.8 L490.25 289.0875 Z"/></g><g fill="#1177dd"><path d="M511.3 278.5 L516.55 278.5 L516.55 283.9 L511.3 283.9 Z"/><path d="M517.3499999999999 278.5 L522.6 278.5 L522.6 283.9 L517.3499999999999 283.9 Z"/><path d="M511.3 284.7 L516.55 284.7 L516.55 290.1 L511.3 290.1 Z"/><path d="M517.3499999999999 284.7 L522.6 284.7 L522.6 290.1 L517.3499999999999 290.1 Z"/></g></svg>
<span style="left:17.9px;top:4.52px;font-size:7.4px;color:#1a1a1a;transform:scaleX(0.9162);-webkit-text-stroke:0.1px #1a1a1a;">WinPaletter</span>
<span style="left:33.7px;top:70.02px;font-size:8.7px;color:#0c0c0c;font-weight:700;transform:scaleX(0.9549);-webkit-text-stroke:0.3px #0c0c0c;">Toggles</span>
<span style="left:30px;top:90.52px;font-size:8.0px;color:#1c1c1c;transform:scaleX(0.8814);-webkit-text-stroke:0.18px #1c1c1c;">Windows Mode</span>
<span style="left:189.2px;top:90.52px;font-size:8.0px;color:#1c1c1c;transform:scaleX(0.8720);-webkit-text-stroke:0.18px #1c1c1c;">App Mode</span>
<span style="left:30px;top:108.52px;font-size:8.0px;color:#1c1c1c;transform:scaleX(0.8492);-webkit-text-stroke:0.18px #1c1c1c;">Transparency (Acrylic)</span>
<span style="left:30px;top:125.52px;font-size:8.0px;color:#1c1c1c;transform:scaleX(0.8793);-webkit-text-stroke:0.18px #1c1c1c;">Accent Color on:</span>
<span style="left:35.1px;top:150.02px;font-size:8.7px;color:#0c0c0c;font-weight:700;transform:scaleX(0.9733);-webkit-text-stroke:0.3px #0c0c0c;">Titlebars</span>
<span style="left:30px;top:170.52px;font-size:8.0px;color:#1c1c1c;transform:scaleX(0.8677);-webkit-text-stroke:0.18px #1c1c1c;">Active Titlebar</span>
<span style="left:188.7px;top:170.52px;font-size:8.0px;color:#1c1c1c;transform:scaleX(0.8620);-webkit-text-stroke:0.18px #1c1c1c;">Inactive Titlebar</span>
<span style="left:35.0px;top:194.02px;font-size:8.7px;color:#0c0c0c;font-weight:700;transform:scaleX(0.9227);-webkit-text-stroke:0.3px #0c0c0c;">Accents</span>
<span style="left:124.0px;top:169.52px;font-size:7.2px;color:#459ce2;font-family:'Liberation Mono', monospace;transform:scaleX(0.8293);text-decoration:underline;text-decoration-thickness:0.6px;text-underline-offset:0.9px;">0 #0078D7</span>
<span style="left:271.0px;top:169.52px;font-size:7.2px;color:#454545;font-family:'Liberation Mono', monospace;transform:scaleX(0.8293);text-decoration:underline;text-decoration-thickness:0.6px;text-underline-offset:0.9px;">0 #000000</span>
<span style="left:30.6px;top:214.52px;font-size:8.0px;color:#0c0c0c;font-weight:700;transform:scaleX(0.8533);-webkit-text-stroke:0.3px #0c0c0c;">1</span>
<span style="left:40.5px;top:214.52px;font-size:8.0px;color:#1c1c1c;transform:scaleX(0.8836);-webkit-text-stroke:0.18px #1c1c1c;">Sliding Hamburger Menu</span>
<span style="left:271.0px;top:213.52px;font-size:7.2px;color:#45759a;font-family:'Liberation Mono', monospace;transform:scaleX(0.8293);text-decoration:underline;text-decoration-thickness:0.6px;text-underline-offset:0.9px;">0 #004275</span>
<span style="left:30.6px;top:231.52px;font-size:8.0px;color:#0c0c0c;font-weight:700;transform:scaleX(0.8533);-webkit-text-stroke:0.3px #0c0c0c;">2</span>
<span style="left:40.5px;top:231.52px;font-size:8.0px;color:#1c1c1c;transform:scaleX(0.8649);-webkit-text-stroke:0.18px #1c1c1c;">Action Center Links</span>
<span style="left:271.0px;top:231.52px;font-size:7.2px;color:#82abcb;font-family:'Liberation Mono', monospace;transform:scaleX(0.8293);text-decoration:underline;text-decoration-thickness:0.6px;text-underline-offset:0.9px;">0 #A6D8FF</span>
<span style="left:30.6px;top:249.52px;font-size:8.0px;color:#0c0c0c;font-weight:700;transform:scaleX(0.8533);-webkit-text-stroke:0.3px #0c0c0c;">3</span>
<span style="left:40.5px;top:249.52px;font-size:8.0px;color:#1c1c1c;transform:scaleX(0.8534);-webkit-text-stroke:0.18px #1c1c1c;">Taskbar App Underline</span>
<span style="left:271.0px;top:248.52px;font-size:7.2px;color:#5f94be;font-family:'Liberation Mono', monospace;transform:scaleX(0.8293);text-decoration:underline;text-decoration-thickness:0.6px;text-underline-offset:0.9px;">0 #76B9ED</span>
<span style="left:30.6px;top:266.52px;font-size:8.0px;color:#0c0c0c;font-weight:700;transform:scaleX(0.8533);-webkit-text-stroke:0.3px #0c0c0c;">4</span>
<span style="left:40.5px;top:266.52px;font-size:8.0px;color:#1c1c1c;transform:scaleX(0.8841);-webkit-text-stroke:0.18px #1c1c1c;">Start Menu &amp; Action Center</span>
<span style="left:271.0px;top:266.52px;font-size:7.2px;color:#4587b8;font-family:'Liberation Mono', monospace;transform:scaleX(0.8293);text-decoration:underline;text-decoration-thickness:0.6px;text-underline-offset:0.9px;">0 #005A9E</span>
<span style="left:30.6px;top:284.52px;font-size:8.0px;color:#0c0c0c;font-weight:700;transform:scaleX(0.8533);-webkit-text-stroke:0.3px #0c0c0c;">5</span>
<span style="left:40.5px;top:284.52px;font-size:8.0px;color:#1c1c1c;transform:scaleX(0.8455);-webkit-text-stroke:0.18px #1c1c1c;">Settings Icons, Links &amp; Some Pressed Buttons</span>
<span style="left:271.0px;top:283.52px;font-size:7.2px;color:#459ce2;font-family:'Liberation Mono', monospace;transform:scaleX(0.8293);text-decoration:underline;text-decoration-thickness:0.6px;text-underline-offset:0.9px;">0 #0078D7</span>
<span style="left:30.6px;top:301.52px;font-size:8.0px;color:#0c0c0c;font-weight:700;transform:scaleX(0.8533);-webkit-text-stroke:0.3px #0c0c0c;">6</span>
<span style="left:40.5px;top:301.52px;font-size:8.0px;color:#1c1c1c;transform:scaleX(0.8620);-webkit-text-stroke:0.18px #1c1c1c;">Start Menu Icon Hover</span>
<span style="left:271.0px;top:300.52px;font-size:7.2px;color:#75b7eb;font-family:'Liberation Mono', monospace;transform:scaleX(0.8293);text-decoration:underline;text-decoration-thickness:0.6px;text-underline-offset:0.9px;">0 #429CE3</span>
<span style="left:30.6px;top:319.52px;font-size:8.0px;color:#0c0c0c;font-weight:700;transform:scaleX(0.8533);-webkit-text-stroke:0.3px #0c0c0c;">7</span>
<span style="left:40.5px;top:319.52px;font-size:8.0px;color:#1c1c1c;transform:scaleX(0.8556);-webkit-text-stroke:0.18px #1c1c1c;">UWP Dialogs Background (Windows 8.1 remnants in Windows 10)</span>
<span style="left:271.0px;top:318.52px;font-size:7.2px;color:#4587b8;font-family:'Liberation Mono', monospace;transform:scaleX(0.8293);text-decoration:underline;text-decoration-thickness:0.6px;text-underline-offset:0.9px;">0 #005A9E</span>
<span style="left:30.6px;top:336.52px;font-size:8.0px;color:#0c0c0c;font-weight:700;transform:scaleX(0.8533);-webkit-text-stroke:0.3px #0c0c0c;">8</span>
<span style="left:40.5px;top:336.52px;font-size:8.0px;color:#1c1c1c;transform:scaleX(0.8031);-webkit-text-stroke:0.18px #1c1c1c;">Taskbar</span>
<span style="left:271.0px;top:335.52px;font-size:7.2px;color:#456175;font-family:'Liberation Mono', monospace;transform:scaleX(0.8293);text-decoration:underline;text-decoration-thickness:0.6px;text-underline-offset:0.9px;">0 #002642</span>
<span style="left:30.3px;top:353.52px;font-size:8.0px;color:#0c0c0c;font-weight:700;transform:scaleX(0.7500);-webkit-text-stroke:0.3px #0c0c0c;">C.</span>
<span style="left:40.5px;top:353.52px;font-size:8.0px;color:#1c1c1c;transform:scaleX(0.8771);-webkit-text-stroke:0.18px #1c1c1c;">Undefined</span>
<span style="left:271.0px;top:353.52px;font-size:7.2px;color:#f98d4e;font-family:'Liberation Mono', monospace;transform:scaleX(0.8293);text-decoration:underline;text-decoration-thickness:0.6px;text-underline-offset:0.9px;">0 #F7630C</span>
<span style="left:16.9px;top:401.52px;font-size:8.0px;color:#1c1c1c;transform:scaleX(0.8558);-webkit-text-stroke:0.18px #1c1c1c;">Wallpaper Tone</span>
<span style="left:70.10000000000001px;top:401.52px;font-size:8.0px;color:#1c1c1c;transform:scaleX(0.8460);-webkit-text-stroke:0.18px #1c1c1c;">Metrics, Fonts</span>
<span style="left:123.4px;top:401.52px;font-size:8.0px;color:#1c1c1c;transform:scaleX(0.8301);-webkit-text-stroke:0.18px #1c1c1c;">Terminals ...</span>
<span style="left:180.1px;top:401.52px;font-size:8.0px;color:#1c1c1c;transform:scaleX(0.7853);-webkit-text-stroke:0.18px #1c1c1c;">Cursors</span>
<span style="left:227.70000000000002px;top:401.52px;font-size:8.0px;color:#1c1c1c;transform:scaleX(0.8570);-webkit-text-stroke:0.18px #1c1c1c;">Win32UI</span>
<span style="left:280.5px;top:401.52px;font-size:8.0px;color:#1c1c1c;transform:scaleX(0.8592);-webkit-text-stroke:0.18px #1c1c1c;">Экран</span>
<span style="left:375.8px;top:397.52px;font-size:8.0px;color:#1c1c1c;transform:scaleX(0.8860);-webkit-text-stroke:0.18px #1c1c1c;">Закрыть</span>
<span style="left:444.7px;top:397.52px;font-size:8.0px;color:#1c1c1c;transform:scaleX(0.8910);-webkit-text-stroke:0.18px #1c1c1c;">Logoff</span>
<span style="left:506.4px;top:397.52px;font-size:8.0px;color:#1c1c1c;transform:scaleX(0.8167);-webkit-text-stroke:0.18px #1c1c1c;">Restart Explorer</span>
<span style="left:587.1px;top:397.52px;font-size:8.0px;color:#1c1c1c;transform:scaleX(0.8732);-webkit-text-stroke:0.18px #1c1c1c;">Применить</span>
<span style="left:348.1px;top:69.02px;font-size:8.3px;color:#0c0c0c;font-weight:700;transform:scaleX(1.1482);-webkit-text-stroke:0.3px #0c0c0c;">Текущий режим (1.0)</span>
<span style="left:352.9px;top:79.52px;font-size:8.0px;color:#2a2a2a;transform:scaleX(0.8097);-webkit-text-stroke:0.18px #2a2a2a;">By: MANSORY</span>
<span style="left:566.7px;top:74.52px;font-size:8.0px;color:#1c1c1c;transform:scaleX(0.8936);-webkit-text-stroke:0.18px #1c1c1c;">Миниатюра</span>
<span style="left:458.9px;top:111.52px;font-size:7.7px;color:#222;transform:scaleX(0.8828);-webkit-text-stroke:0.18px #222;">Предварительный</span>
<span style="left:458.9px;top:120.52px;font-size:7.7px;color:#222;transform:scaleX(0.9119);-webkit-text-stroke:0.18px #222;">просмотр приложения</span>
<span style="left:461.9px;top:157.52px;font-size:7.7px;color:#111;transform:scaleX(0.9276);-webkit-text-stroke:0.18px #111;">Значок настройки</span>
<span style="left:458.9px;top:177.52px;font-size:7.9px;color:#1473d0;transform:scaleX(0.8616);-webkit-text-stroke:0.18px #1473d0;">Settings Link Preview</span>
<span style="left:458.9px;top:198.52px;font-size:7.7px;color:#8a8a8a;transform:scaleX(0.8994);-webkit-text-stroke:0.18px #8a8a8a;">Неактивное</span>
<span style="left:458.9px;top:207.52px;font-size:7.7px;color:#8a8a8a;transform:scaleX(0.9146);-webkit-text-stroke:0.18px #8a8a8a;">приложение</span>
<span style="left:273.1px;top:38.52px;font-size:2.6px;color:#9a31e6;font-weight:700;transform:scaleX(1.0227);">NEW</span>
<span style="left:113.3px;top:125.52px;font-size:8.0px;color:#111;font-weight:700;transform:scaleX(0.7361);-webkit-text-stroke:0.3px #111;">?</span>
<span style="left:279px;top:150.52px;font-size:8.0px;color:#111;font-weight:700;transform:scaleX(0.7361);-webkit-text-stroke:0.3px #111;">?</span>
<span style="left:131.9px;top:125.52px;font-size:8.0px;color:#1c1c1c;transform:scaleX(0.8837);-webkit-text-stroke:0.18px #1c1c1c;">None</span>
<span style="left:170.6px;top:125.52px;font-size:8.0px;color:#1c1c1c;transform:scaleX(0.8460);-webkit-text-stroke:0.18px #1c1c1c;">Taskbar</span>
<span style="left:213.4px;top:125.52px;font-size:8.0px;color:#1c1c1c;transform:scaleX(0.8597);-webkit-text-stroke:0.18px #1c1c1c;">Start, Taskbar &amp; Action Center</span>
<span style="left:234.3px;top:387.02px;font-size:11.5px;color:#c8142a;font-weight:700;transform:scaleX(0.9263);-webkit-text-stroke:0.3px #c8142a;">A</span>
<span style="left:137.6px;top:385.52px;font-size:4.6px;color:#f0f0f0;font-weight:700;transform:scaleX(1.3388);">C:\</span>
</div></body></html>
